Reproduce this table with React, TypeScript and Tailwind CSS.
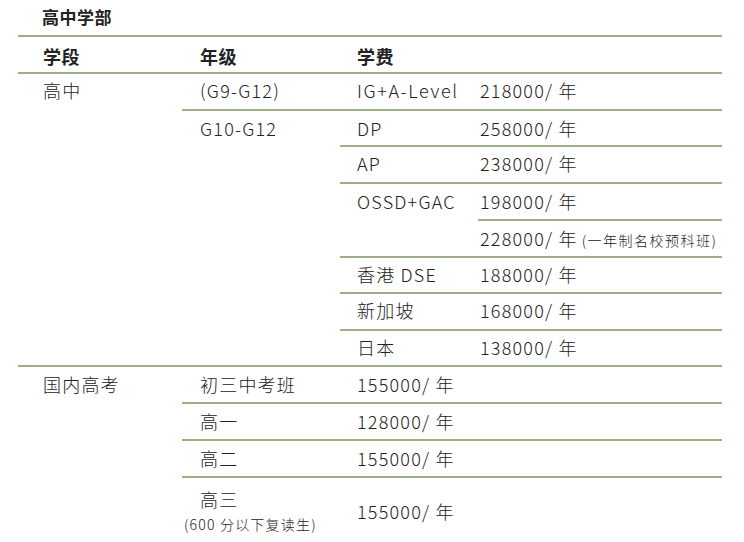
const font = { fontFamily: '"Noto Sans CJK SC", "Noto Sans", sans-serif' }

const line = "border-b-2 border-[#9cb086]"

export default function App() {
  return (
    <div className="w-[744px] h-[542px] overflow-hidden bg-white pl-[18px] text-[#222222]" style={font}>
      <div className={`w-[704px] h-[37px] pl-[24px] pt-[5px] text-[17px] leading-[24px] font-bold tracking-[0.5px] ${line}`}>
        高中学部
      </div>
      <div className="grid w-[704px] grid-cols-[164px_158px_138px_244px] grid-rows-[37px_37px_36px_37px_37px_37px_36px_37px_36px_37px_37px_37px_65px] text-[18px] leading-[24px] tracking-[1.2px] font-light">
        {/* header */}
        <div className={`pl-[25px] pt-[7px] font-bold tracking-[0.5px] ${line}`}>学段</div>
        <div className={`pl-[18px] pt-[7px] font-bold tracking-[0.5px] ${line}`}>年级</div>
        <div className={`col-span-2 pl-[17px] pt-[7px] font-bold tracking-[0.5px] ${line}`}>学费</div>

        {/* 高中 */}
        <div className={`row-span-8 pl-[25px] pt-[4px] ${line}`}>高中</div>
        <div className={`pl-[18px] pt-[4px] ${line}`}>(G9-G12)</div>
        <div className={`pl-[17px] pt-[4px] tracking-[1.6px] ${line}`}>IG+A-Level</div>
        <div className={`pl-[2px] pt-[4px] ${line}`}>218000/ 年</div>

        <div className={`row-span-7 pl-[18px] pt-[5px] ${line}`}>G10-G12</div>
        <div className={`pl-[17px] pt-[5px] ${line}`}>DP</div>
        <div className={`pl-[2px] pt-[5px] ${line}`}>258000/ 年</div>

        <div className={`pl-[17px] pt-[4px] ${line}`}>AP</div>
        <div className={`pl-[2px] pt-[4px] ${line}`}>238000/ 年</div>

        <div className={`row-span-2 pl-[17px] pt-[5px] ${line}`}>OSSD+GAC</div>
        <div className={`pl-[2px] pt-[5px] ${line}`}>198000/ 年</div>
        <div className={`pl-[2px] pt-[5px] whitespace-nowrap ${line}`}>
          228000/ 年<span className="ml-[4px] text-[14px] tracking-[1.5px]">(一年制名校预科班)</span>
        </div>

        <div className={`pl-[17px] pt-[4px] ${line}`}>香港 DSE</div>
        <div className={`pl-[2px] pt-[4px] ${line}`}>188000/ 年</div>

        <div className={`pl-[17px] pt-[4px] ${line}`}>新加坡</div>
        <div className={`pl-[2px] pt-[4px] ${line}`}>168000/ 年</div>

        <div className={`pl-[17px] pt-[4px] ${line}`}>日本</div>
        <div className={`pl-[2px] pt-[4px] ${line}`}>138000/ 年</div>

        {/* 国内高考 */}
        <div className="row-span-4 pl-[25px] pt-[5px]">国内高考</div>
        <div className={`pl-[18px] pt-[5px] ${line}`}>初三中考班</div>
        <div className={`col-span-2 pl-[17px] pt-[5px] ${line}`}>155000/ 年</div>

        <div className={`pl-[18px] pt-[5px] ${line}`}>高一</div>
        <div className={`col-span-2 pl-[17px] pt-[5px] ${line}`}>128000/ 年</div>

        <div className={`pl-[18px] pt-[5px] ${line}`}>高二</div>
        <div className={`col-span-2 pl-[17px] pt-[5px] ${line}`}>155000/ 年</div>

        <div className="flex flex-col pl-[18px] pt-[9px]">
          <span>高三</span>
          <span className="ml-[-16px] mt-[3px] text-[14px] leading-[20px] tracking-[1.2px] whitespace-nowrap">(600 分以下复读生)</span>
        </div>
        <div className="col-span-2 pl-[17px] pt-[21px]">155000/ 年</div>
      </div>
    </div>
  )
}
